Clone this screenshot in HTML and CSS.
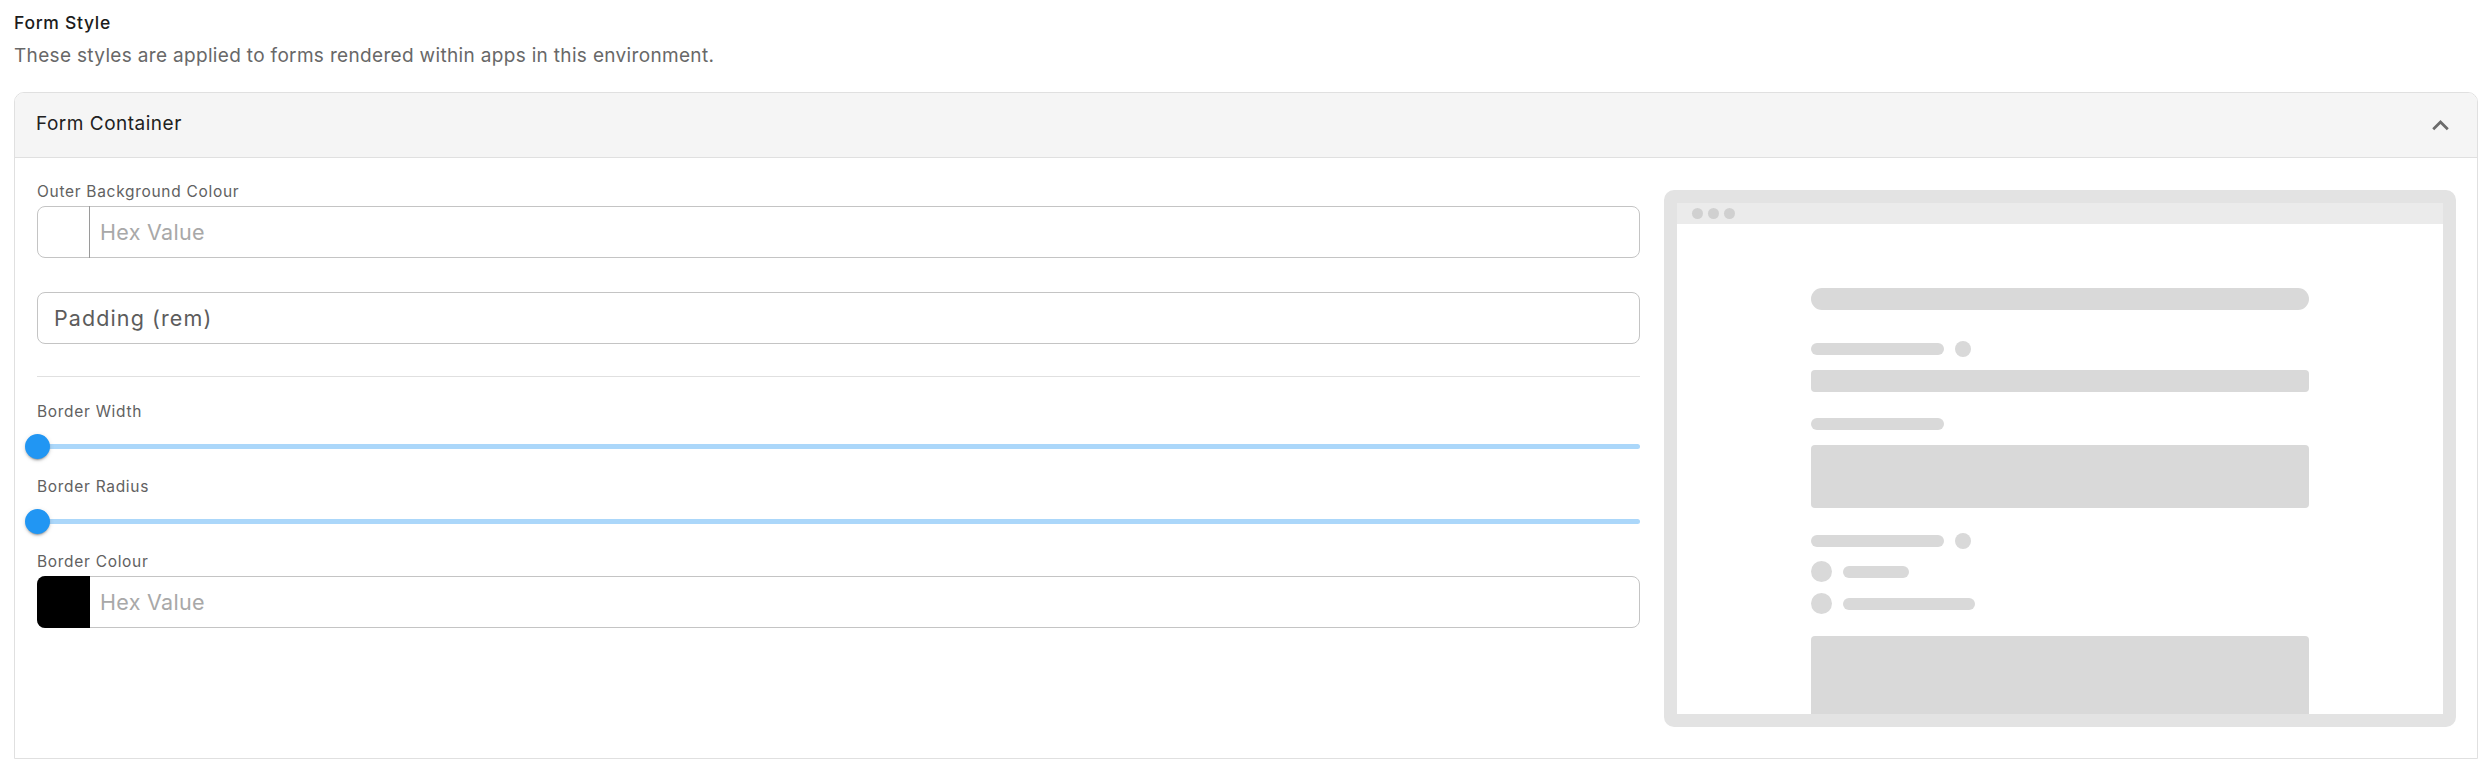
FILE: index.html
```html
<!DOCTYPE html>
<html lang="en">
<head>
<meta charset="utf-8">
<title>Form Style</title>
<link rel="stylesheet" href="styles.css">
</head>
<body>
<div class="page">
  <h2 class="title">Form Style</h2>
  <p class="desc">These styles are applied to forms rendered within apps in this environment.</p>

  <section class="card">
    <div class="card-head">
      <span class="card-title">Form Container</span>
      <svg class="chev" viewBox="0 0 24 24" aria-hidden="true"><path d="M12 8l-6 6 1.41 1.41L12 10.83l4.59 4.58L18 14z"/></svg>
    </div>

    <div class="card-body">
      <div class="fields">
        <div class="label">Outer Background Colour</div>
        <div class="color-input">
          <span class="swatch"></span>
          <span class="placeholder">Hex Value</span>
        </div>

        <div class="text-input"><span class="text-label">Padding (rem)</span></div>

        <div class="divider"></div>

        <div class="label label-first">Border Width</div>
        <div class="slider">
          <div class="track"></div>
          <div class="thumb"></div>
        </div>

        <div class="label label-next">Border Radius</div>
        <div class="slider">
          <div class="track"></div>
          <div class="thumb"></div>
        </div>

        <div class="label label-next">Border Colour</div>
        <div class="color-input">
          <span class="swatch swatch-black"></span>
          <span class="placeholder">Hex Value</span>
        </div>
      </div>

      <div class="preview">
        <div class="frame">
          <div class="frame-bar">
            <span class="dot"></span><span class="dot"></span><span class="dot"></span>
          </div>
          <div class="frame-body">
            <div class="sk">
              <div class="sk-title"></div>
              <div class="sk-row sk-row-1"><span class="sk-label"></span><span class="sk-dot"></span></div>
              <div class="sk-input"></div>
              <div class="sk-row sk-row-2"><span class="sk-label"></span></div>
              <div class="sk-area"></div>
              <div class="sk-row sk-row-3"><span class="sk-label"></span><span class="sk-dot"></span></div>
              <div class="sk-radio sk-radio-1"><span class="sk-radio-dot"></span><span class="sk-opt sk-opt-short"></span></div>
              <div class="sk-radio sk-radio-2"><span class="sk-radio-dot"></span><span class="sk-opt sk-opt-long"></span></div>
              <div class="sk-box"></div>
            </div>
          </div>
        </div>
      </div>
    </div>
  </section>
</div>
</body>
</html>
```

FILE: styles.css
```css
* { box-sizing: border-box; }

html, body {
  margin: 0;
  padding: 0;
  background: #ffffff;
}

body {
  font-family: Inter, "Liberation Sans", sans-serif;
  color: #212121;
}

.page {
  padding: 0 14px;
}

.title {
  margin: 0;
  padding-top: 10px;
  font-size: 17.5px;
  line-height: 26px;
  font-weight: 500;
  letter-spacing: 0.7px;
  color: #1c1c1c;
}

.desc {
  margin: 6px 0 0;
  font-size: 19px;
  line-height: 28px;
  letter-spacing: 0.33px;
  color: #686868;
}

.card {
  margin-top: 22px;
  border: 1px solid #e0e0e0;
  border-radius: 10px 10px 0 0;
  overflow: hidden;
  background: #ffffff;
}

.card-head {
  height: 65px;
  background: #f5f5f5;
  border-bottom: 1px solid #e0e0e0;
  display: flex;
  align-items: center;
  justify-content: space-between;
  padding: 0 20px 2px 21px;
}

.card-title {
  font-size: 19px;
  line-height: 28px;
  letter-spacing: 0.5px;
  color: #212121;
}

.chev {
  width: 33px;
  height: 33px;
  fill: #6b6b6b;
  margin-top: 3px;
}

.card-body {
  display: grid;
  grid-template-columns: minmax(0, 1603fr) minmax(0, 792fr);
  column-gap: 24px;
  align-items: start;
  padding: 22px 21px 31px 22px;
}

.fields {
  display: flex;
  flex-direction: column;
}

.label {
  font-size: 15.5px;
  line-height: 24px;
  letter-spacing: 0.7px;
  color: #616161;
}

.label-first { margin-top: 23px; }
.label-next { margin-top: 17px; }

.color-input {
  margin-top: 2px;
  height: 52px;
  border: 1px solid #c4c4c4;
  border-radius: 8px;
  display: flex;
  align-items: center;
}

.swatch {
  align-self: stretch;
  width: 53px;
  flex: 0 0 53px;
  margin: -1px 0 -1px -1px;
  border-right: 1px solid #9a9a9a;
  border-radius: 8px 0 0 8px;
}

.swatch-black {
  background: #000000;
  border-right: 0;
}

.placeholder {
  margin-left: 10px;
  font-size: 21.5px;
  line-height: 28px;
  letter-spacing: 0.3px;
  color: #a8a8a8;
}

.text-input {
  margin-top: 34px;
  height: 52px;
  border: 1px solid #c4c4c4;
  border-radius: 8px;
  display: flex;
  align-items: center;
  padding-left: 16px;
}

.text-label {
  font-size: 21.5px;
  line-height: 28px;
  letter-spacing: 1.1px;
  color: #5c5c5c;
}

.divider {
  margin-top: 32px;
  height: 1px;
  background: #e0e0e0;
}

.slider {
  position: relative;
  margin-top: 10px;
  height: 24px;
  display: flex;
  align-items: center;
}

.track {
  flex: 1;
  height: 5px;
  border-radius: 3px;
  background: #abd7fa;
}

.thumb {
  position: absolute;
  left: -12px;
  top: 50%;
  width: 25px;
  height: 25px;
  margin-top: -12.5px;
  border-radius: 50%;
  background: #2196f3;
  box-shadow: 0 3px 1px -2px rgba(0,0,0,0.2), 0 2px 2px 0 rgba(0,0,0,0.14), 0 1px 5px 0 rgba(0,0,0,0.12);
}

/* preview */
.preview {
  margin-top: 10px;
}

.frame {
  height: 537px;
  border: 13px solid #e3e3e3;
  border-radius: 10px;
  background: #ffffff;
  display: flex;
  flex-direction: column;
  overflow: hidden;
}

.frame-bar {
  height: 21px;
  flex: 0 0 21px;
  background: #ebebeb;
  display: flex;
  align-items: center;
  gap: 5px;
  padding-left: 15px;
}

.dot {
  width: 11px;
  height: 11px;
  border-radius: 50%;
  background: #d0d0d0;
}

.frame-body {
  flex: 1;
  overflow: hidden;
}

.sk {
  width: 65%;
  margin: 0 auto;
  padding-top: 64px;
  display: flex;
  flex-direction: column;
}

.sk-title {
  height: 22px;
  border-radius: 11px;
  background: #d9d9d9;
}

.sk-row {
  height: 16px;
  display: flex;
  align-items: center;
  gap: 11px;
}

.sk-row-1 { margin-top: 31px; }
.sk-row-2 { margin-top: 24px; }
.sk-row-3 { margin-top: 25px; }

.sk-label {
  width: 133px;
  height: 12px;
  border-radius: 6px;
  background: #d9d9d9;
}

.sk-dot {
  width: 16px;
  height: 16px;
  border-radius: 50%;
  background: #d9d9d9;
}

.sk-input {
  margin-top: 13px;
  height: 22px;
  border-radius: 4px;
  background: #d9d9d9;
}

.sk-area {
  margin-top: 13px;
  height: 63px;
  border-radius: 4px;
  background: #d9d9d9;
}

.sk-radio {
  height: 21px;
  display: flex;
  align-items: center;
  gap: 11px;
}

.sk-radio-1 { margin-top: 12px; }
.sk-radio-2 { margin-top: 11px; }

.sk-radio-dot {
  width: 21px;
  height: 21px;
  border-radius: 50%;
  background: #d9d9d9;
}

.sk-opt {
  height: 12px;
  border-radius: 6px;
  background: #d9d9d9;
}

.sk-opt-short { width: 66px; }
.sk-opt-long { width: 132px; }

.sk-box {
  margin-top: 22px;
  height: 110px;
  border-radius: 4px;
  background: #d9d9d9;
}
```
